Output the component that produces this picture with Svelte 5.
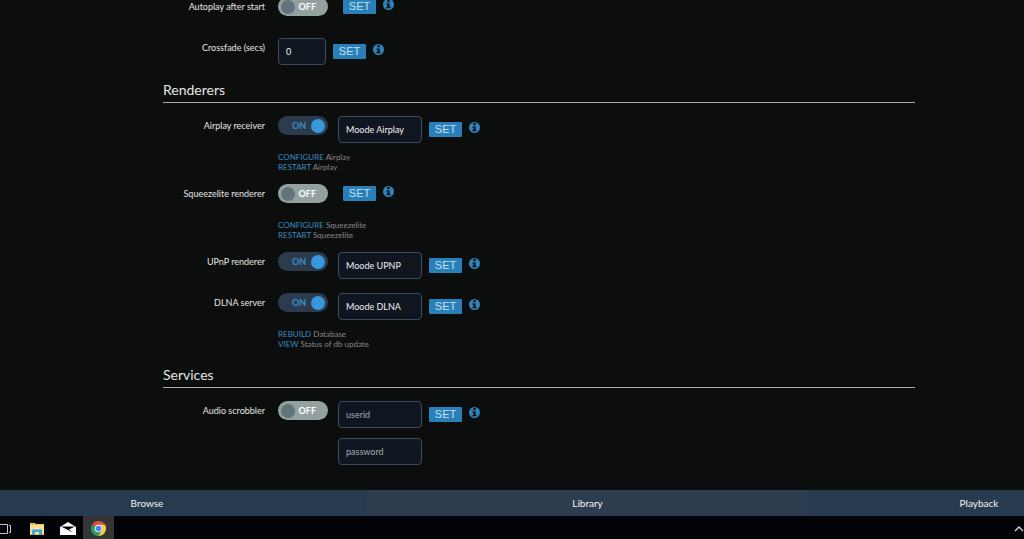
<script lang="ts">
	interface Field {
		id: string;
		value?: string;
		placeholder?: string;
		type?: 'text' | 'password';
	}

	interface Setting {
		id: string;
		label: string;
		on?: boolean;
		field?: Field;
		extra?: Field;
		narrow?: boolean;
		help?: { action: string; text: string }[];
	}

	interface Section {
		title?: string;
		rows: Setting[];
	}

	let sections = $state<Section[]>([
		{
			rows: [
				{ id: 'autoplay', label: 'Autoplay after start', on: false },
				{ id: 'crossfade', label: 'Crossfade (secs)', narrow: true, field: { id: 'crossfade-secs', value: '0' } }
			]
		},
		{
			title: 'Renderers',
			rows: [
				{
					id: 'airplay',
					label: 'Airplay receiver',
					on: true,
					field: { id: 'airplay-name', value: 'Moode Airplay' },
					help: [
						{ action: 'CONFIGURE', text: 'Airplay' },
						{ action: 'RESTART', text: 'Airplay' }
					]
				},
				{
					id: 'squeezelite',
					label: 'Squeezelite renderer',
					on: false,
					help: [
						{ action: 'CONFIGURE', text: 'Squeezelite' },
						{ action: 'RESTART', text: 'Squeezelite' }
					]
				},
				{ id: 'upnp', label: 'UPnP renderer', on: true, field: { id: 'upnp-name', value: 'Moode UPNP' } },
				{
					id: 'dlna',
					label: 'DLNA server',
					on: true,
					field: { id: 'dlna-name', value: 'Moode DLNA' },
					help: [
						{ action: 'REBUILD', text: 'Database' },
						{ action: 'VIEW', text: 'Status of db update' }
					]
				}
			]
		},
		{
			title: 'Services',
			rows: [
				{
					id: 'scrobbler',
					label: 'Audio scrobbler',
					on: false,
					field: { id: 'scrobbler-user', value: '', placeholder: 'userid' },
					extra: { id: 'scrobbler-pass', value: '', placeholder: 'password', type: 'password' }
				}
			]
		}
	]);
</script>

<div class="page">
	<main>
		{#each sections as section}
			<section>
				{#if section.title}
					<h2>{section.title}</h2>
				{/if}
				{#each section.rows as row}
					<div class="row">
						<label class="name" for={row.on === undefined ? row.field?.id : row.id}>{row.label}</label>
						<div class="body">
							<div class="controls" class:plain={!row.field} class:narrow={row.narrow}>
								{#if row.on !== undefined}
									<span class="toggle" class:on={row.on}>
										<input id={row.id} type="checkbox" bind:checked={row.on} />
										<span class="state">{row.on ? 'ON' : 'OFF'}</span>
										<span class="knob"></span>
									</span>
								{/if}
								{#if row.field}
									<div class="fields">
										<input
											class="text"
											id={row.field.id}
											aria-label={row.label}
											placeholder={row.field.placeholder}
											bind:value={row.field.value}
										/>
										{#if row.extra}
											<input
												class="text"
												id={row.extra.id}
												type={row.extra.type}
												aria-label="Password"
												placeholder={row.extra.placeholder}
												bind:value={row.extra.value}
											/>
										{/if}
									</div>
								{/if}
								<div class="actions">
									<button class="set" type="button">SET</button>
									<button class="info" type="button" aria-label="About {row.label}">
										<svg viewBox="0 0 20 20" width="11" height="11">
											<circle cx="10" cy="10" r="10" />
											<path d="M8 2h4v4H8zM6 8h6v7h2v2H6v-2h2v-5H6z" />
										</svg>
									</button>
								</div>
							</div>
							{#if row.help}
								<div class="help">
									{#each row.help as item}
										<div><a href="#{row.id}">{item.action}</a> {item.text}</div>
									{/each}
								</div>
							{/if}
						</div>
					</div>
				{/each}
			</section>
		{/each}
	</main>

	<nav>
		<a class="browse" href="#browse">Browse</a>
		<a class="library" href="#library">Library</a>
		<a class="playback" href="#playback">Playback</a>
	</nav>

	<footer>
		<button type="button" class="view" aria-label="Task view">
			<svg viewBox="0 0 12 12" width="12" height="12" fill="none" stroke="#c8c8c8">
				<path d="M-1 1.5H7.500V10.500H-1M9 2.500H10.500V9.500H9" />
			</svg>
		</button>
		<button type="button" aria-label="File Explorer">
			<svg viewBox="0 0 16 14" width="16" height="14">
				<path d="M1 1h5l1 1h8v11H1z" fill="#e9bd55" />
				<path d="M1 3h14v9H1z" fill="#fbe08c" />
				<path d="M3 7h10v6h-3v-3H6v3H3z" fill="#3fa6cf" />
				<path d="M3 7h10v1H3z" fill="#79c8e4" />
			</svg>
		</button>
		<button type="button" aria-label="Mail">
			<svg viewBox="0 0 16 14" width="16" height="14">
				<path d="M0 5L8 0l8 5v8H0z" fill="#fff" />
				<path d="M1 4.500h14L9 7.500l4 3z" fill="#07080b" />
			</svg>
		</button>
		<button type="button" class="active" aria-label="Chrome">
			<svg viewBox="0 0 16 16" width="15" height="15">
				<path d="M8 8L1.070 4A8 8 0 0 1 14.930 4z" fill="#dd4f43" />
				<path d="M8 8L1.070 4A8 8 0 0 0 8 16L11.460 10z" fill="#27a05f" />
				<path d="M8 4h6.930A8 8 0 0 1 8 16l3.460-6z" fill="#fbcb43" />
				<circle cx="8" cy="8" r="4" fill="#f2f2f2" />
				<circle cx="8" cy="8" r="3" fill="#4a83ee" />
			</svg>
		</button>
		<button type="button" class="tray" aria-label="Show hidden icons">
			<svg viewBox="0 0 10 6" width="10" height="6" fill="none" stroke="#d8d8d8" stroke-width="1.300">
				<path d="M1 5l4-4 4 4" />
			</svg>
		</button>
	</footer>
</div>

<style>
	:global(body) {
		margin: 0;
		background: #0c0e0d;
	}

	.page {
		display: flex;
		flex-direction: column;
		min-height: 100vh;
		overflow: hidden;
		font-family: Lato, sans-serif;
		font-size: 9px;
		color: #e4e6e6;
	}

	/* the list is scrolled slightly past its first row */
	main {
		flex: 1;
		margin-top: -3px;
		padding: 0 109px 0 163px;
	}

	section:last-of-type {
		margin-top: 3px;
	}

	h2 {
		margin: 0 0 13px;
		padding-bottom: 2px;
		font-size: 14px;
		font-weight: 400;
		line-height: 21px;
		border-bottom: 1px solid #a9adab;
	}

	.row {
		display: grid;
		grid-template-columns: 102px 1fr;
		column-gap: 13px;
		padding-bottom: 14px;
	}

	.name {
		line-height: 20px;
		text-align: right;
		white-space: nowrap;
	}

	.controls {
		display: flex;
		align-items: flex-start;
		gap: 10px;
		min-height: 27px;
	}

	.toggle {
		position: relative;
		box-sizing: border-box;
		display: flex;
		flex-direction: row-reverse;
		align-items: center;
		justify-content: space-between;
		width: 50px;
		height: 19px;
		padding: 0 12px 0 3px;
		border-radius: 10px;
		background: #93a2a1;
		color: #fff;
		font-weight: 700;
	}

	.toggle.on {
		flex-direction: row;
		padding: 0 3px 0 14px;
		background: #2c3c4e;
		color: #3a8fcb;
	}

	.toggle input {
		position: absolute;
		inset: 0;
		width: 100%;
		height: 100%;
		margin: 0;
		opacity: 0;
		cursor: pointer;
	}

	.knob {
		width: 14px;
		height: 14px;
		border-radius: 50%;
		background: #62737c;
	}

	.on .knob {
		background: #3897da;
	}

	.fields {
		display: flex;
		flex-direction: column;
		gap: 10px;
	}

	.text {
		box-sizing: border-box;
		width: 84px;
		height: 27px;
		padding: 0 7px 1px;
		border: 1px solid #3a4c5e;
		border-radius: 4px;
		background: #10161f;
		color: #f0f2f2;
		font: inherit;
	}

	.text::placeholder {
		color: #a4abb0;
		opacity: 1;
	}

	.narrow .text {
		width: 48px;
	}

	.actions {
		display: flex;
		align-items: flex-start;
		gap: 7px;
		margin: 6px 0 0 -3px;
	}

	.plain .actions {
		margin: 2px 0 0 5px;
	}

	.set {
		width: 33px;
		height: 15px;
		padding: 0;
		border: 0;
		border-radius: 1px;
		background: #2980b9;
		color: #c3e0f2;
		font-family: 'Liberation Sans', Arial, sans-serif;
		font-size: 11px;
		line-height: 15px;
	}

	.info {
		display: flex;
		padding: 0;
		border: 0;
		background: none;
	}

	.info circle {
		fill: #2f83bd;
	}

	.info path {
		fill: #0c0e0d;
	}

	.help {
		margin-top: 9px;
		margin-bottom: -2px;
		color: #84888a;
		font-size: 8px;
		line-height: 10px;
	}

	.help a {
		color: #3a8ac2;
		text-decoration: none;
	}

	nav {
		display: grid;
		grid-template-columns: 367fr 441fr 216fr;
		font-size: 10px;
		line-height: 26px;
		text-align: center;
	}

	nav a {
		background: #263b4f;
		color: #f2f4f5;
		text-decoration: none;
	}

	nav .library {
		background: #2d3d4f;
	}

	/* outer tabs run past the window edges */
	nav .browse {
		padding-right: 73px;
	}

	nav .playback {
		padding-left: 126px;
	}

	footer {
		display: flex;
		height: 23px;
		background: #020308;
	}

	footer button {
		display: flex;
		align-items: center;
		justify-content: center;
		width: 31px;
		padding: 2px 0 0;
		border: 0;
		background: none;
	}

	footer .view {
		justify-content: flex-start;
		width: 21px;
	}

	footer .active {
		background: #343537;
	}

	footer .tray {
		justify-content: flex-end;
		margin-left: auto;
	}
</style>
